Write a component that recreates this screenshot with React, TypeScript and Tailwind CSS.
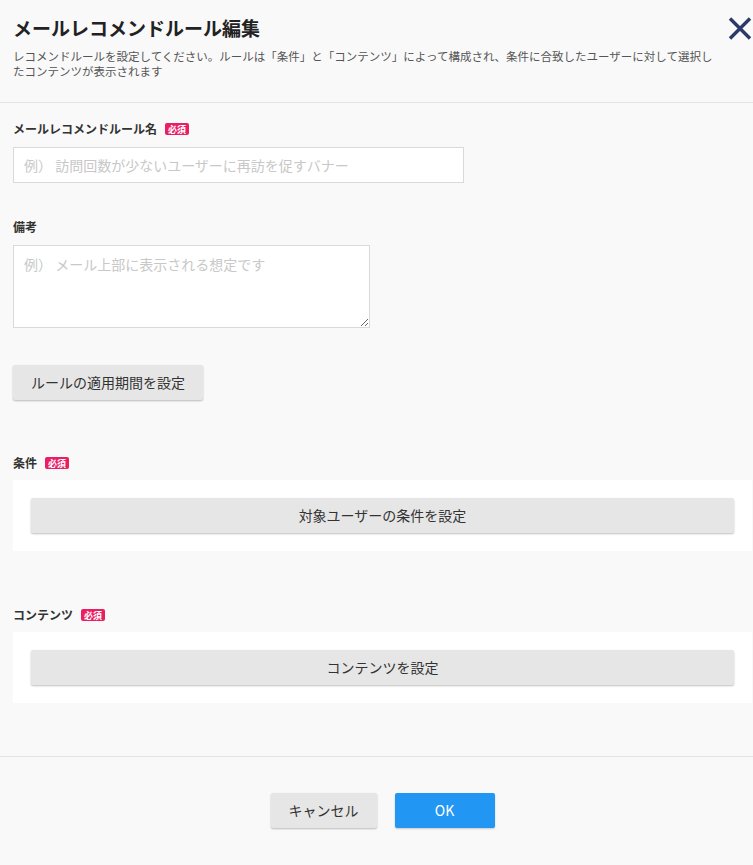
const Badge = () => (
  <span className="ml-2 inline-flex h-[12px] items-center rounded-[2px] bg-[#e91e63] px-[3px] text-[9px] font-bold leading-none text-white">
    必須
  </span>
);

const GrayButton = ({ children, className = "" }: { children: React.ReactNode; className?: string }) => (
  <button
    type="button"
    className={`h-[35px] rounded-[2px] bg-[#e6e6e6] text-[14px] text-[#333] shadow-[0_1px_2px_rgba(0,0,0,0.25)] ${className}`}
  >
    {children}
  </button>
);

export default function App() {
  return (
    <div
      className="min-h-[865px] w-[753px] bg-[#f9f9f9] text-[#333]"
      style={{ fontFamily: '"Noto Sans CJK JP", "Noto Sans", sans-serif' }}
    >
      {/* Header */}
      <header className="relative border-b border-[#e3e3e3] pl-[13px] pr-[40px] pt-[13px] pb-[23px]">
        <h1 className="text-[19px] font-bold leading-[30px] text-[#222]">メールレコメンドルール編集</h1>
        <p className="mt-[6px] w-[700px] text-[11.5px] leading-[15px] text-[#555]">
          レコメンドルールを設定してください。ルールは「条件」と「コンテンツ」によって構成され、条件に合致したユーザーに対して選択したコンテンツが表示されます
        </p>
        <button type="button" className="absolute right-[1px] top-[17px] h-[23px] w-[24px]">
          <svg viewBox="0 0 24 23" className="h-full w-full">
            <path d="M2 1.5 L22 21.5 M22 1.5 L2 21.5" stroke="#2b3a67" strokeWidth="3.4" fill="none" />
          </svg>
        </button>
      </header>

      {/* Body */}
      <main className="border-b border-[#e3e3e3] pl-[13px] pr-[1px] pt-[18px] pb-[53px]">
        <div className="flex items-center text-[12px] font-bold leading-[16px]">
          メールレコメンドルール名
          <Badge />
        </div>
        <input
          type="text"
          placeholder="例） 訪問回数が少ないユーザーに再訪を促すバナー"
          className="mt-[10px] h-[36px] w-[451px] border border-[#d9d9d9] bg-white px-[10px] text-[14px] outline-none placeholder:text-[#c8c8c8]"
        />

        <div className="mt-[36px] text-[12px] font-bold leading-[16px]">備考</div>
        <textarea
          placeholder="例） メール上部に表示される想定です"
          className="mt-[10px] block h-[83px] w-[357px] resize border border-[#d9d9d9] bg-white px-[10px] py-[8px] text-[14px] outline-none placeholder:text-[#c8c8c8]"
        />

        <GrayButton className="mt-[37px] w-[190px]">ルールの適用期間を設定</GrayButton>

        <div className="mt-[55px] flex items-center text-[12px] font-bold leading-[16px]">
          条件
          <Badge />
        </div>
        <div className="mt-[9px] bg-white pl-[18px] pr-[18px] py-[18px]">
          <GrayButton className="w-full">対象ユーザーの条件を設定</GrayButton>
        </div>

        <div className="mt-[56px] flex items-center text-[12px] font-bold leading-[16px]">
          コンテンツ
          <Badge />
        </div>
        <div className="mt-[9px] bg-white pl-[18px] pr-[18px] py-[18px]">
          <GrayButton className="w-full">コンテンツを設定</GrayButton>
        </div>
      </main>

      {/* Footer */}
      <footer className="flex justify-center gap-[18px] pl-[12px] pt-[36px]">
        <GrayButton className="w-[106px]">キャンセル</GrayButton>
        <button
          type="button"
          className="h-[35px] w-[100px] rounded-[2px] bg-[#2196f3] text-[14px] text-white shadow-[0_1px_2px_rgba(0,0,0,0.2)]"
        >
          OK
        </button>
      </footer>
    </div>
  );
}
